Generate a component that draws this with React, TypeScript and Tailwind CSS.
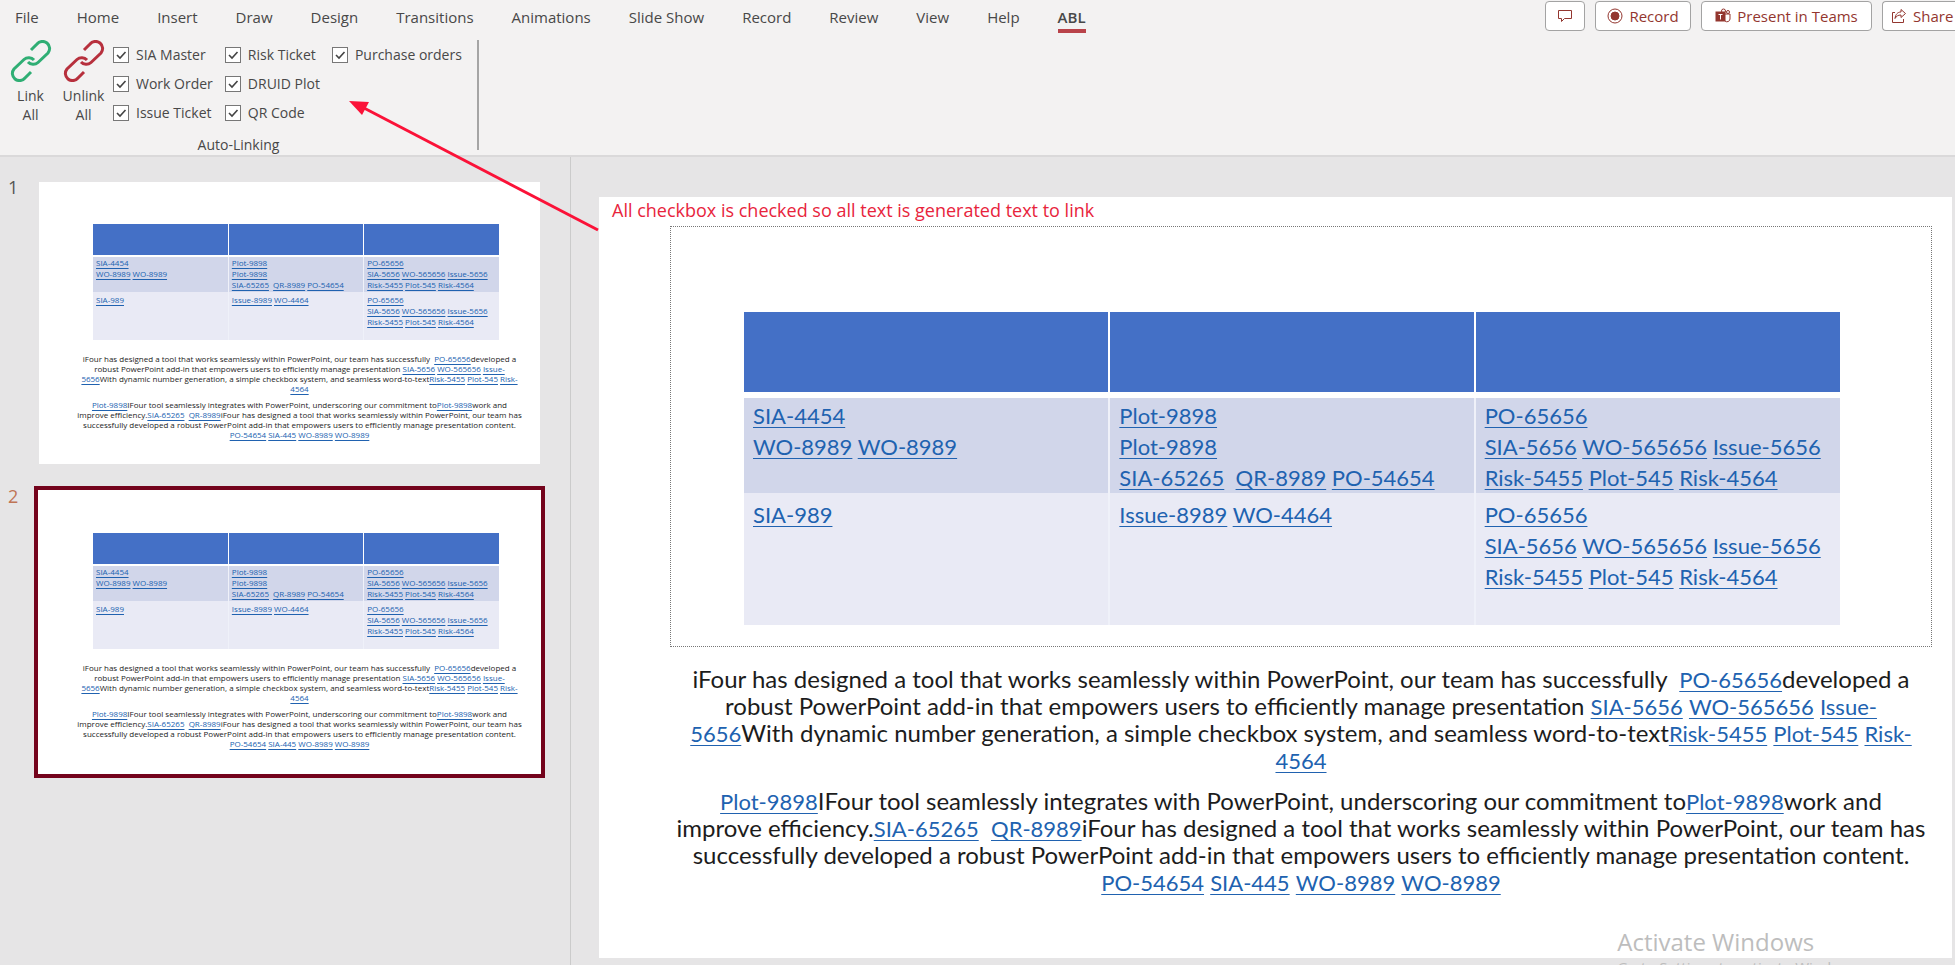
import { clsx } from 'clsx'

type Segment = string | { link: string }

const TABS = [
	'File',
	'Home',
	'Insert',
	'Draw',
	'Design',
	'Transitions',
	'Animations',
	'Slide Show',
	'Record',
	'Review',
	'View',
	'Help',
	'ABL'
]

const CHECKBOX_COLUMNS = [['SIA Master', 'Work Order', 'Issue Ticket'], ['Risk Ticket', 'DRUID Plot', 'QR Code'], ['Purchase orders']]

const l = (link: string): Segment => ({ link })

const PO_CELL: Segment[][] = [
	[l('PO-65656')],
	[l('SIA-5656'), ' ', l('WO-565656'), ' ', l('Issue-5656')],
	[l('Risk-5455'), ' ', l('Plot-545'), ' ', l('Risk-4564')]
]

const ROWS: Segment[][][][] = [
	[
		[[l('SIA-4454')], [l('WO-8989'), ' ', l('WO-8989')]],
		[[l('Plot-9898')], [l('Plot-9898')], [l('SIA-65265'), '  ', l('QR-8989'), ' ', l('PO-54654')]],
		PO_CELL
	],
	[[[l('SIA-989')]], [[l('Issue-8989'), ' ', l('WO-4464')]], PO_CELL]
]

const PARAGRAPHS: Segment[][][] = [
	[
		['iFour has designed a tool that works seamlessly within PowerPoint, our team has successfully  ', l('PO-65656'), 'developed a'],
		[
			'robust PowerPoint add-in that empowers users to efficiently manage presentation ',
			l('SIA-5656'),
			' ',
			l('WO-565656'),
			' ',
			l('Issue-')
		],
		[
			l('5656'),
			'With dynamic number generation, a simple checkbox system, and seamless word-to-text',
			l('Risk-5455'),
			' ',
			l('Plot-545'),
			' ',
			l('Risk-')
		],
		[l('4564')]
	],
	[
		[
			l('Plot-9898'),
			'IFour tool seamlessly integrates with PowerPoint, underscoring our commitment to',
			l('Plot-9898'),
			'work and'
		],
		[
			'improve efficiency.',
			l('SIA-65265'),
			'  ',
			l('QR-8989'),
			'iFour has designed a tool that works seamlessly within PowerPoint, our team has'
		],
		['successfully developed a robust PowerPoint add-in that empowers users to efficiently manage presentation content.'],
		[l('PO-54654'), ' ', l('SIA-445'), ' ', l('WO-8989'), ' ', l('WO-8989')]
	]
]

function Line({ segments, mini }: { readonly mini?: boolean; readonly segments: Segment[] }) {
	return (
		<span className="block whitespace-pre">
			{segments.map((segment, idx) =>
				typeof segment === 'string' ? (
					segment
				) : (
					<a
						key={idx}
						href="#"
						className={clsx(
							'leading-none text-[#2062b0] underline decoration-1',
							mini ? 'underline-offset-2' : 'text-[22px] underline-offset-3'
						)}
					>
						{segment.link}
					</a>
				)
			)}
		</span>
	)
}

const ROW_STYLES = [
	{ full: 'h-[98px]', mini: 'h-9', color: 'bg-[#d1d6ea]', fullCell: 'pt-0.5', miniCell: 'pt-0' },
	{ full: 'h-[132px]', mini: 'h-12', color: 'bg-[#e9eaf5]', fullCell: 'pt-1.5', miniCell: 'pt-0.5' }
]

function SlideTable({ mini }: { readonly mini?: boolean }) {
	return (
		<table className="w-full table-fixed border-collapse">
			<thead>
				<tr className={clsx('border-white bg-[#4470c6]', mini ? 'h-8 border-b-2' : 'h-[83px] border-b-6')}>
					{[0, 1, 2].map(col => (
						<th key={col} className={clsx('border-white not-last:border-r', !mini && 'not-last:border-r-2')} />
					))}
				</tr>
			</thead>
			<tbody>
				{ROWS.map((cells, row) => {
					const style = ROW_STYLES[row]
					return (
						<tr key={row} className={clsx(style.color, mini ? style.mini : style.full)}>
							{cells.map((lines, col) => (
								<td
									key={col}
									className={clsx(
										'border-[#eff1f9] align-top not-last:border-r',
										mini ? 'pl-[3px] leading-[11px]' : 'pl-[9px] text-[22px] leading-[31px] not-last:border-r-2',
										mini ? style.miniCell : style.fullCell
									)}
								>
									{lines.map((segments, idx) => (
										<Line key={idx} segments={segments} mini={mini} />
									))}
								</td>
							))}
						</tr>
					)
				})}
			</tbody>
		</table>
	)
}

function SlideText({ mini }: { readonly mini?: boolean }) {
	return (
		<div
			className={clsx(
				'flex flex-col items-center text-center text-[#1c1c1c]',
				mini ? 'gap-1.5 leading-[10px]' : 'gap-3.5 text-2xl leading-[27px]'
			)}
		>
			{PARAGRAPHS.map((lines, idx) => (
				<p key={idx}>
					{lines.map((segments, line) => (
						<Line key={line} segments={segments} mini={mini} />
					))}
				</p>
			))}
		</div>
	)
}

function Thumbnail({ index, active }: { readonly active?: boolean; readonly index: number }) {
	return (
		<div className="flex">
			<span className={clsx('w-[34px] pl-2 text-lg leading-5', active ? 'text-[#bf7455]' : 'text-[#555]')}>{index}</span>
			<div className={clsx('flex-1 border-4 p-px', active ? 'border-[#74031c] bg-white' : 'border-transparent')}>
				<div className="h-[282px] overflow-hidden bg-white pt-[42px] font-['Open_Sans',sans-serif] text-[8px]">
					<div className="pr-[41px] pl-[54px]">
						<SlideTable mini />
					</div>
					<div className="mt-3.5 pl-5">
						<SlideText mini />
					</div>
				</div>
			</div>
		</div>
	)
}

function ChainIcon({ className }: { readonly className: string }) {
	return (
		<svg viewBox="0 0 42 42" className={clsx('size-[42px]', className)} fill="none" stroke="currentColor" strokeWidth="3">
			<path d="M21 10l6-6a7 7 0 0 1 11 9l-10 9.500a7 7 0 0 1-10-.5" />
			<path d="M21 32l-6 6a7 7 0 0 1-11-9l10-9.500a7 7 0 0 1 10 .5" />
		</svg>
	)
}

function LinkButton({ label, color }: { readonly color: string; readonly label: string }) {
	return (
		<button type="button" className="flex w-[53px] shrink-0 flex-col items-center leading-[19px]">
			<ChainIcon className={color} />
			<span className="mt-1">{label}</span>
			<span>All</span>
		</button>
	)
}

function RibbonCheckbox({ label }: { readonly label: string }) {
	return (
		<label className="flex h-[29px] items-center gap-[7px] whitespace-nowrap">
			<span className="grid size-4 place-items-center">
				<input type="checkbox" defaultChecked className="col-start-1 row-start-1 size-4 appearance-none border border-[#777] bg-white" />
				<svg viewBox="0 0 16 16" className="pointer-events-none col-start-1 row-start-1 size-4" fill="none" stroke="#444" strokeWidth="1.6">
					<path d="M4 8l3 3 5.500-6" />
				</svg>
			</span>
			{label}
		</label>
	)
}

const ACTION = 'flex h-[30px] items-center rounded border border-[#a3a3a3] bg-white text-[#93362f]'

export default function App() {
	return (
		<div className="relative flex h-screen flex-col overflow-hidden bg-[#e6e5e6] font-['Open_Sans',sans-serif] text-[15px] text-[#484848]">
			<header className="h-[157px] shrink-0 border-b-2 border-[#dad9da] bg-[#f3f2f2]">
				<div className="flex items-start">
					<nav className="flex gap-[38px] pl-[15px] leading-[34px] whitespace-nowrap">
						{TABS.map(tab => (
							<button key={tab} type="button" className={clsx('h-[33px]', tab === 'ABL' && 'border-b-4 border-[#b9434a] font-semibold')}>
								{tab}
							</button>
						))}
					</nav>
					<div className="ml-auto flex gap-2.5 pt-px whitespace-nowrap">
						<button type="button" aria-label="Comments" className={clsx(ACTION, 'w-10 justify-center')}>
							<svg viewBox="0 0 16 16" className="size-4" fill="none" stroke="currentColor">
								<path d="M1.500 2.500h13v8h-7l-3 3v-3h-3z" />
							</svg>
						</button>
						<button type="button" className={clsx(ACTION, 'w-24 justify-center gap-1.5')}>
							<svg viewBox="0 0 16 16" className="size-4" fill="none" stroke="currentColor">
								<circle cx="8" cy="8" r="7" />
								<circle cx="8" cy="8" r="4" fill="currentColor" />
							</svg>
							Record
						</button>
						<button type="button" className={clsx(ACTION, 'w-[171px] justify-center gap-1.5')}>
							<svg viewBox="0 0 16 16" className="size-4" fill="none" stroke="currentColor">
								<circle cx="8.500" cy="3" r="2" />
								<circle cx="13" cy="4" r="1.500" />
								<path d="M9 6h6v5a3 3 0 0 1-5 2" />
								<rect x="1" y="4" width="9" height="9" fill="currentColor" />
								<path d="M3.500 6.500h4M5.500 6.500v5" stroke="white" />
							</svg>
							Present in Teams
						</button>
						<button type="button" className={clsx(ACTION, 'w-[73px] gap-1.5 rounded-r-none border-r-0 pl-2')}>
							<svg viewBox="0 0 16 16" className="size-4" fill="none" stroke="currentColor">
								<path d="M4 4.500H1.500v10h11V11" />
								<path d="M10 1.500l4.500 4-4.500 4V7c-3 0-4.500 1-6 3.500C4.500 6.500 6.500 4 10 4z" />
							</svg>
							Share
						</button>
					</div>
				</div>
				<div className="mt-[7px] flex h-[110px] w-[479px] border-r-2 border-[#a5a5a5] text-sm">
					<section aria-label="Auto-Linking" className="flex w-full flex-col">
						<div className="flex pl-1">
							<LinkButton label="Link" color="text-[#2fae74]" />
							<LinkButton label="Unlink" color="text-[#b7303d]" />
							<div className="flex gap-3 pl-[3px]">
								{CHECKBOX_COLUMNS.map((labels, idx) => (
									<div key={idx}>
										{labels.map(label => (
											<RibbonCheckbox key={label} label={label} />
										))}
									</div>
								))}
							</div>
						</div>
						<span className="mt-2 text-center">Auto-Linking</span>
					</section>
				</div>
			</header>

			<div className="flex min-h-0 flex-1">
				<aside className="flex w-[571px] shrink-0 flex-col gap-[17px] border-r border-[#cbcbcb] pt-5 pr-[25px]">
					<Thumbnail index={1} />
					<Thumbnail index={2} active />
				</aside>
				<main className="min-w-0 flex-1 pt-10 pr-[3px] pl-7">
					<article className="h-[761px] bg-white pr-5 pl-[71px] font-['Lato',sans-serif]">
						<p className="-ml-[58px] h-[29px] font-['Open_Sans',sans-serif] text-lg leading-[26px] text-[#e8243c]">
							All checkbox is checked so all text is generated text to link
						</p>
						<div className="h-[421px] border border-dotted border-[#777] pt-[85px] pr-[91px] pl-[73px]">
							<SlideTable />
						</div>
						<div className="mt-[18px]">
							<SlideText />
						</div>
					</article>
				</main>
			</div>

			{/* callout arrow from the slide note up to the ribbon group */}
			<svg className="pointer-events-none absolute top-0 left-0 h-60 w-[620px]" viewBox="0 0 620 240">
				<path d="M598 230L364 108" stroke="#fb1238" strokeWidth="3" />
				<path d="M349 101L369 102L362 115Z" fill="#fb1238" />
			</svg>
			<div className="pointer-events-none absolute right-[92px] -bottom-3 leading-[20px] text-[#bdbdbd]">
				<p className="text-2xl leading-[30px]">Activate Windows</p>
				<p>Go to Settings to activate Windows.</p>
			</div>
		</div>
	)
}
